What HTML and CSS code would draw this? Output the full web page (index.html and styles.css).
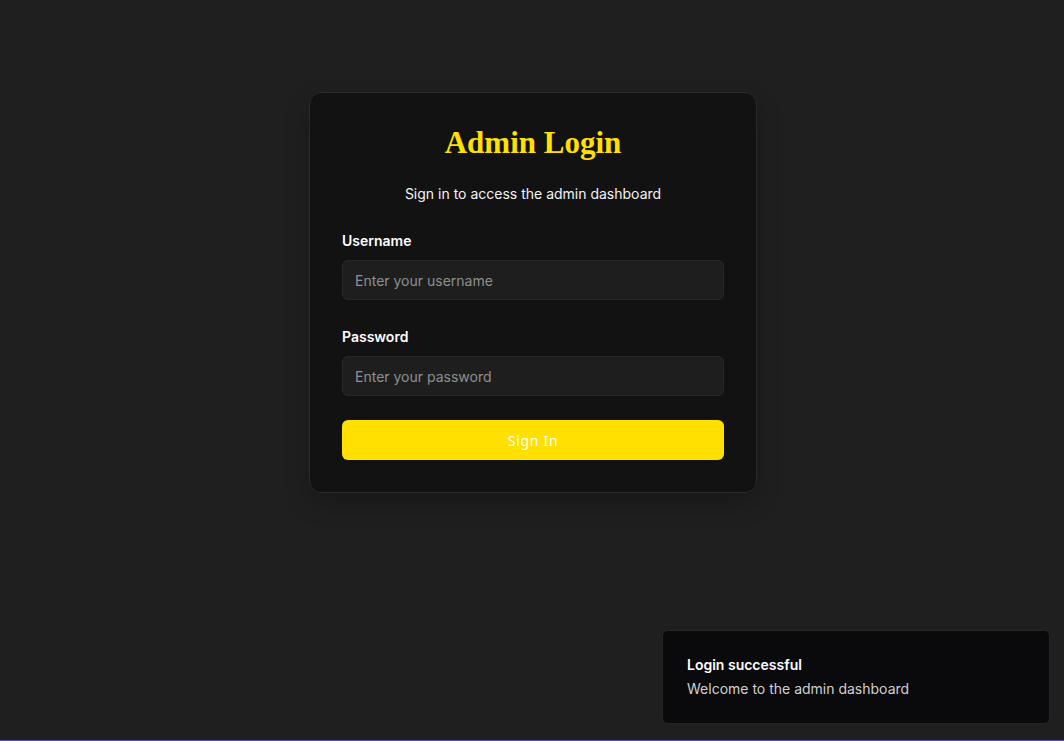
FILE: index.html
```html
<!DOCTYPE html>
<html lang="en">
<head>
<meta charset="utf-8">
<title>Admin Login</title>
<link rel="stylesheet" href="styles.css">
</head>
<body>
<main class="page">
  <section class="card">
    <h1 class="title">Admin Login</h1>
    <p class="subtitle">Sign in to access the admin dashboard</p>
    <form class="form">
      <div class="field">
        <label class="label" for="username">Username</label>
        <input class="input" id="username" type="text" placeholder="Enter your username">
      </div>
      <div class="field">
        <label class="label" for="password">Password</label>
        <input class="input" id="password" type="password" placeholder="Enter your password">
      </div>
      <button class="btn" type="button">Sign In</button>
    </form>
  </section>
</main>
<div class="toast">
  <div class="toast-title">Login successful</div>
  <div class="toast-desc">Welcome to the admin dashboard</div>
</div>
</body>
</html>
```
FILE: styles.css
```css
* { box-sizing: border-box; }
html, body { height: 100%; }
body {
  margin: 0;
  background: #1f1f1f;
  font-family: Inter, "Noto Sans", sans-serif;
  color: #fff;
  border-bottom: 1px solid #5b4ad6;
  overflow: hidden;
}
.page {
  height: 100%;
  display: flex;
  flex-direction: column;
  align-items: center;
  padding-top: 92px;
  padding-left: 2px;
}
.card {
  width: 448px;
  background: #121212;
  border: 1px solid #2a2a2a;
  border-radius: 12px;
  padding: 31px 32px 32px;
  box-shadow: 0 10px 24px rgba(0,0,0,0.22);
}
.title {
  margin: 0;
  text-align: center;
  font-family: "Liberation Serif", "DejaVu Serif", serif;
  font-weight: 700;
  font-size: 31px;
  line-height: 38px;
  color: #ffe000;
}
.subtitle {
  margin: 22px 0 0;
  text-align: center;
  font-size: 14px;
  line-height: 20px;
  color: #f2f2f2;
}
.form {
  margin-top: 27px;
  display: flex;
  flex-direction: column;
}
.field {
  display: flex;
  flex-direction: column;
  gap: 9px;
  margin-bottom: 27px;
}
.field + .field { margin-bottom: 24px; }
.label {
  font-size: 14px;
  line-height: 20px;
  font-weight: 600;
  color: #fff;
}
.input {
  height: 40px;
  background: #1e1e1e;
  border: 1px solid #282828;
  border-radius: 6px;
  padding: 0 12px;
  font-family: Inter, "Noto Sans", sans-serif;
  font-size: 14px;
  color: #fff;
  outline: none;
}
.input::placeholder { color: #8f8f8f; }
.btn {
  height: 40px;
  background: #ffe000;
  border: none;
  border-radius: 6px;
  color: #fff;
  font-family: "Noto Sans", "Open Sans", sans-serif;
  font-size: 14px;
  font-weight: 400;
  letter-spacing: 0.7px;
}
.toast {
  position: fixed;
  right: 14px;
  bottom: 17px;
  width: 388px;
  height: 94px;
  background: #0a0a0c;
  border: 1px solid #262626;
  border-radius: 6px;
  padding: 24px 24px;
}
.toast-title {
  font-size: 14px;
  line-height: 20px;
  font-weight: 600;
  color: #fff;
}
.toast-desc {
  margin-top: 4px;
  font-size: 14px;
  line-height: 20px;
  color: #d0d0d0;
}
```
